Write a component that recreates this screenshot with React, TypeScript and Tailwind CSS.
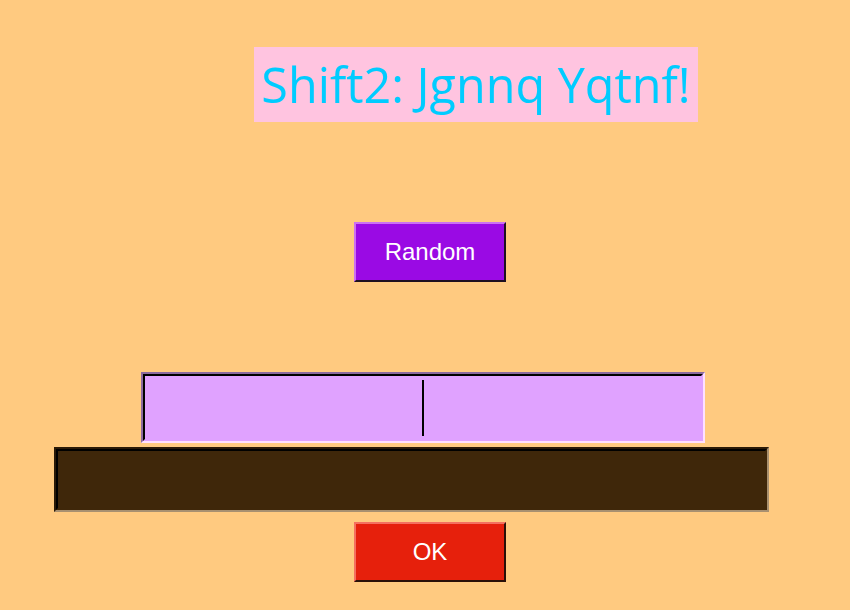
import React from "react";

export default function App() {
  return (
    <div className="w-full h-[610px] bg-[#ffca80] flex flex-col items-start overflow-hidden">
      <div className="mt-[47px] ml-[254px] w-[444px] h-[75px] bg-[#ffc4e0] flex items-start justify-center pt-[13px]">
        <span
          className="text-[#00ccff] text-[48.5px] leading-none whitespace-nowrap"
          style={{ fontFamily: '"Open Sans", "Noto Sans", sans-serif' }}
        >
          Shift2: Jgnnq Yqtnf!
        </span>
      </div>

      <button
        className="mt-[100px] ml-[354px] w-[152px] h-[60px] bg-[#9a0ae4] text-white text-[24px] border-2 border-t-[#cc70f2] border-l-[#cc70f2] border-b-[#1e1020] border-r-[#1e1020] flex items-center justify-center"
        style={{ fontFamily: '"Liberation Sans", Arial, sans-serif' }}
      >
        Random
      </button>

      <div className="mt-[90px] ml-[141px] w-[564px] h-[71px] border-2 border-t-[#8c6aa0] border-l-[#8c6aa0] border-b-[#ffe0ff] border-r-[#ffe0ff]">
        <div className="w-full h-full bg-[#e0a2ff] border-2 border-t-black border-l-black border-b-[#e0a2ff] border-r-[#e0a2ff] flex items-center justify-center">
          <div className="w-[2px] h-[56px] bg-black" />
        </div>
      </div>

      <div className="mt-[4px] ml-[54px] w-[715px] h-[65px] border-2 border-t-[#2a1a08] border-l-[#2a1a08] border-b-[#a89070] border-r-[#a89070]">
        <div className="w-full h-full bg-[#3f270a] border-2 border-t-black border-l-black border-b-[#3f270a] border-r-[#3f270a]" />
      </div>

      <button
        className="mt-[10px] ml-[354px] w-[152px] h-[60px] bg-[#e6200c] text-white text-[24px] border-2 border-t-[#f47060] border-l-[#f47060] border-b-[#2a1008] border-r-[#2a1008] flex items-center justify-center"
        style={{ fontFamily: '"Liberation Sans", Arial, sans-serif' }}
      >
        OK
      </button>
    </div>
  );
}
